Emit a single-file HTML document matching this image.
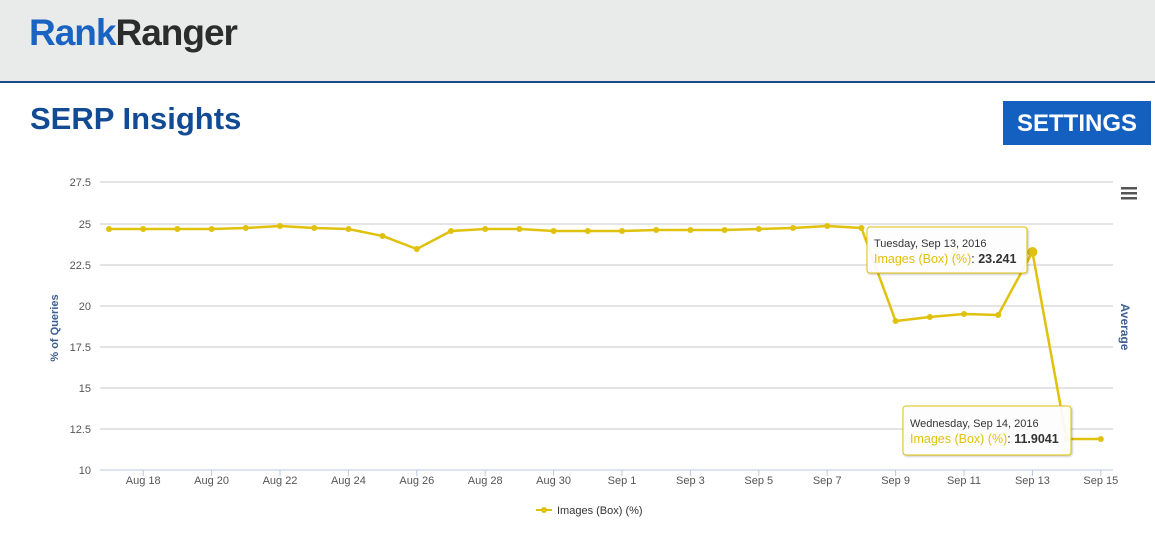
<!DOCTYPE html>
<html><head><meta charset="utf-8"><style>
body{margin:0;width:1155px;height:542px;overflow:hidden;background:#fff;font-family:"Liberation Sans",sans-serif;position:relative}
.hdr{position:absolute;left:0;top:0;width:1155px;height:81px;background:#e9eaea;border-bottom:2px solid #1a4a8c}
.logo{position:absolute;left:29px;top:12px;font-size:37px;font-weight:bold;letter-spacing:-1px}
.title{position:absolute;left:30px;top:101px;font-size:31px;font-weight:bold;color:#124a93}
.btn{position:absolute;left:1003px;top:101px;width:148px;height:44px;background:#1460c0;color:#fff;font-size:24px;font-weight:bold;text-align:center;line-height:46px}
</style></head><body>
<div class="hdr"><div class="logo"><span style="color:#1a63c1">Rank</span><span style="color:#2c2c2c">Ranger</span></div></div>
<div class="title">SERP Insights</div>
<div class="btn">SETTINGS</div>
<svg id="c" width="1155" height="542" style="position:absolute;left:0;top:0" font-family="Liberation Sans, sans-serif"></svg>
<script>
var s='<defs><filter id="sh"><feDropShadow dx="1" dy="1" stdDeviation="1" flood-opacity="0.25"/></filter></defs>';
var gy=[182,224,265,306,347,388,429,470],lab=['27.5','25','22.5','20','17.5','15','12.5','10'];
gy.forEach(function(y,i){s+='<line x1="100" x2="1113" y1="'+y+'" y2="'+y+'" stroke="'+(i==7?'#b8c8e0':'#c8c8c8')+'"/>';
s+='<text x="91" y="'+(y+4)+'" text-anchor="end" font-size="11" fill="#555">'+lab[i]+'</text>';});
var xl=['Aug 18','Aug 20','Aug 22','Aug 24','Aug 26','Aug 28','Aug 30','Sep 1','Sep 3','Sep 5','Sep 7','Sep 9','Sep 11','Sep 13','Sep 15'];
function X(i){return 109+i*34.2}
xl.forEach(function(t,k){var x=X(1+2*k);s+='<line x1="'+x+'" x2="'+x+'" y1="470" y2="476" stroke="#b8c8e0"/><text x="'+x+'" y="484" text-anchor="middle" font-size="11" fill="#555">'+t+'</text>';});
var ys=[229,229,229,229,228,226,228,229,236,249,231,229,229,231,231,231,230,230,230,229,228,226,228,321,317,314,315,252,439,439];
var p=ys.map(function(y,i){return X(i)+','+y}).join(' ');
s+='<polyline points="'+p+'" fill="none" stroke="#e0c10e" stroke-width="2.5"/>';
ys.forEach(function(y,i){s+='<circle cx="'+X(i)+'" cy="'+y+'" r="'+(i==27?5:3)+'" fill="#e0c10e"/>';});
s+='<text transform="translate(58,328) rotate(-90)" text-anchor="middle" font-size="11" font-weight="bold" fill="#3d5f8f">% of Queries</text>';
s+='<text transform="translate(1121,327) rotate(90)" text-anchor="middle" font-size="12" font-weight="bold" fill="#3d5f8f">Average</text>';
s+='<rect x="1121" y="187" width="16" height="2.5" fill="#555"/><rect x="1121" y="192" width="16" height="2.5" fill="#555"/><rect x="1121" y="197" width="16" height="2.5" fill="#555"/>';
s+='<rect x="867" y="227" width="160" height="46" rx="3" fill="rgba(255,255,255,0.92)" stroke="#e0c10e" filter="url(#sh)"/>';
s+='<text x="874" y="247" font-size="11" fill="#333">Tuesday, Sep 13, 2016</text>';
s+='<text x="874" y="263" font-size="12.5" fill="#e0c10e">Images (Box) (%)<tspan fill="#333">: </tspan><tspan fill="#333" font-weight="bold">23.241</tspan></text>';
s+='<rect x="903" y="406" width="168" height="49" rx="3" fill="rgba(255,255,255,0.92)" stroke="#e0c10e" filter="url(#sh)"/>';
s+='<text x="910" y="427" font-size="11" fill="#333">Wednesday, Sep 14, 2016</text>';
s+='<text x="910" y="443" font-size="12.5" fill="#e0c10e">Images (Box) (%)<tspan fill="#333">: </tspan><tspan fill="#333" font-weight="bold">11.9041</tspan></text>';
s+='<line x1="536" x2="552" y1="510" y2="510" stroke="#e0c10e" stroke-width="2"/><circle cx="544" cy="510" r="3" fill="#e0c10e"/>';
s+='<text x="557" y="514" font-size="11" fill="#333">Images (Box) (%)</text>';
document.getElementById('c').innerHTML=s;
</script>
</body></html>
